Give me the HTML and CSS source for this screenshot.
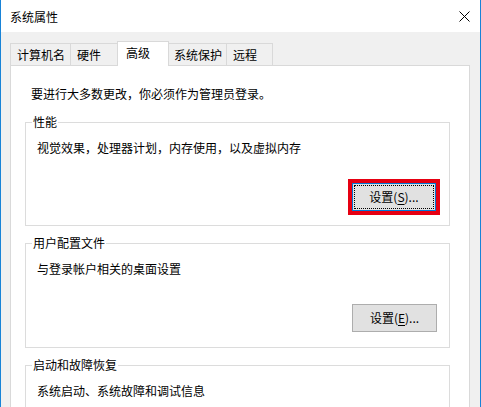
FILE: index.html
```html
<!DOCTYPE html>
<html lang="zh-CN">
<head>
<meta charset="UTF-8" />
<title>系统属性</title>
<link rel="stylesheet" href="styles.css">
</head>
<body>
  <div class="window">
    <div class="titlebar">
      <span class="title">系统属性</span>
      <svg class="close" width="11" height="11" viewBox="0 0 11 11" aria-label="关闭">
        <path d="M0.5 0.5 L10.5 10.5 M10.5 0.5 L0.5 10.5" stroke="#000" stroke-width="1" fill="none" />
      </svg>
    </div>

    <div class="client">
      <div class="tabs" role="tablist">
        <div class="tab tab-name" role="tab">计算机名</div>
        <div class="tab tab-hw" role="tab">硬件</div>
        <div class="tab tab-adv selected" role="tab" aria-selected="true">高级</div>
        <div class="tab tab-prot" role="tab">系统保护</div>
        <div class="tab tab-remote" role="tab">远程</div>
      </div>

      <div class="panel" role="tabpanel">
        <p class="note">要进行大多数更改，你必须作为管理员登录。</p>

        <fieldset class="group">
          <legend>性能</legend>
          <p class="desc">视觉效果，处理器计划，内存使用，以及虚拟内存</p>
          <div class="actions">
            <button class="btn focused"><span class="focus-ring">设置(<u>S</u>)...</span></button>
          </div>
        </fieldset>

        <fieldset class="group">
          <legend>用户配置文件</legend>
          <p class="desc">与登录帐户相关的桌面设置</p>
          <div class="actions">
            <button class="btn"><span class="focus-ring">设置(<u>E</u>)...</span></button>
          </div>
        </fieldset>

        <fieldset class="group">
          <legend>启动和故障恢复</legend>
          <p class="desc">系统启动、系统故障和调试信息</p>
        </fieldset>
      </div>
    </div>
  </div>
</body>
</html>
```

FILE: styles.css
```css
* {
  box-sizing: border-box;
}
html, body {
  margin: 0;
  width: 481px;
  height: 407px;
  overflow: hidden;
}
body {
  font-family: "Noto Sans CJK SC", "Noto Sans", sans-serif;
  font-size: 12px;
  line-height: 16px;
  color: #000;
  background: #fff;
}

.window {
  width: 481px;
  height: 407px;
  border-left: 1px solid #1883d7;
  border-right: 1px solid #1883d7;
  display: flex;
  flex-direction: column;
  overflow: hidden;
}

/* title bar */
.titlebar {
  height: 32px;
  flex: none;
  background: #fff;
  display: flex;
  align-items: center;
  justify-content: space-between;
  padding: 0 10px 0 9px;
}
.title {
  margin-top: 2px;
}
.close {
  display: block;
}

/* dialog body */
.client {
  flex: 1;
  background: #f0f0f0;
  display: flex;
  flex-direction: column;
  padding-top: 9px;
}

.tabs {
  display: flex;
  align-items: flex-end;
  padding-left: 9px;
  position: relative;
  z-index: 1;
}
.tab {
  height: 22px;
  padding: 3px 0 0 6px;
  border: 1px solid #d9d9d9;
  border-bottom: none;
  background: #f0f0f0;
  white-space: nowrap;
}
.tab + .tab {
  margin-left: -1px;
}
.tab-name { width: 61px; }
.tab-hw { width: 48px; }
.tab-adv { width: 52px; }
.tab-prot { width: 59px; padding-left: 5px; }
.tab-remote { width: 47px; }

.tab.selected {
  height: 25px;
  margin-bottom: -1px;
  padding-left: 8px;
  background: #fff;
  position: relative;
  z-index: 2;
}

.panel {
  flex: 1;
  width: 460px;
  margin-left: 9px;
  background: #fff;
  border: 1px solid #d9d9d9;
  padding: 20px 19px 0 14px;
}

.note {
  margin: 0 0 0 6px;
}

/* group boxes */
.group {
  width: 425px;
  margin: 12px 0 0 0;
  padding: 0 12px 14px 6px;
  border: 1px solid #dcdcdc;
  min-inline-size: 0;
}
.group + .group {
  margin-top: 9px;
}
.group:nth-of-type(2) {
  padding-bottom: 15px;
}
.group legend {
  padding: 0 1px;
  line-height: 16px;
}

.desc {
  margin: 10px 0 0 5px;
}

.actions {
  display: flex;
  justify-content: flex-end;
  margin-top: 27px;
}

.btn {
  width: 85px;
  height: 28px;
  padding: 1px;
  margin: 0;
  background: #e1e1e1;
  border: 1px solid #adadad;
  font: inherit;
  color: #000;
  display: flex;
}
.focus-ring {
  flex: 1;
  display: flex;
  align-items: center;
  justify-content: center;
  border: 1px solid transparent;
}
.btn u {
  text-decoration-thickness: 1px;
  text-underline-offset: 2px;
}

/* highlighted button */
.btn.focused {
  width: 84px;
  border-color: #0078d7;
  outline: 4px solid #e60012;
  outline-offset: 0;
  margin-right: 1px;
}
.btn.focused .focus-ring {
  border: 1px dotted #000;
}
```
